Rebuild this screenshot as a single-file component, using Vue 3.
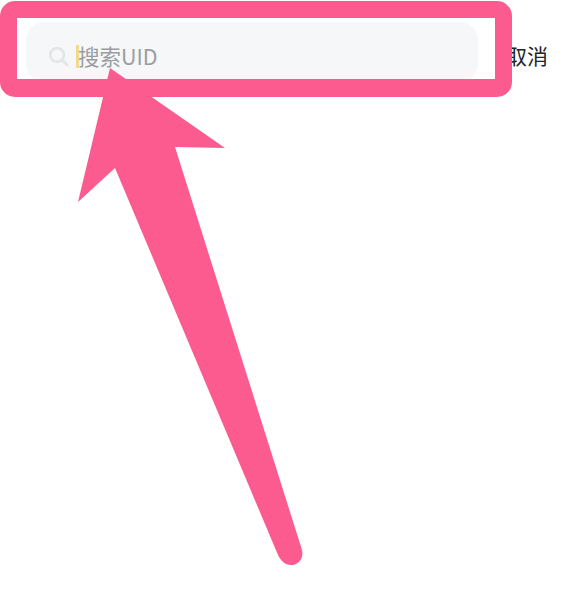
<template>
  <div class="page">
    <div class="search-bar">
      <div class="search-input">
        <svg class="search-icon" viewBox="0 0 22 22" fill="none">
          <circle cx="9.5" cy="9.5" r="7.2" stroke="#e3e5e6" stroke-width="2.8" />
          <path d="M14.8 14.8 L20 19.8" stroke="#e3e5e6" stroke-width="3" stroke-linecap="round" />
        </svg>
        <span class="caret"></span>
        <span class="placeholder">搜索UID</span>
      </div>
      <span class="cancel">取消</span>
    </div>

    <!-- annotation drawn over the screenshot -->
    <div class="highlight"></div>
    <svg class="arrow" viewBox="0 0 578 600">
      <path
        d="M110 68 L225 148 L175 147 L302 550 C304 559 298 565 291 565 C285 565 281 561 278 555 L115 168 L78 202 Z"
        fill="#fb5b8f"
      />
    </svg>
  </div>
</template>

<script setup>
</script>

<style scoped>
.page {
  position: relative;
  width: 578px;
  height: 600px;
  overflow: hidden;
  background: #fff;
  font-family: "Noto Sans CJK SC", "Noto Sans", sans-serif;
}

.search-bar {
  display: flex;
  align-items: flex-start;
  padding: 22px 0 0 26px;
}

.search-input {
  display: flex;
  align-items: center;
  width: 452px;
  height: 60px;
  padding: 8px 0 0 22px;
  box-sizing: border-box;
  border-radius: 18px;
  background: #f5f7f8;
}

.search-icon {
  width: 21px;
  height: 21px;
}

.caret {
  width: 3px;
  height: 23px;
  margin-left: 7px;
  background: #f3d98a;
}

.placeholder {
  margin-left: -1px;
  font-size: 21.5px;
  line-height: 24px;
  color: #9b9ea0;
}

.cancel {
  margin-left: 28px;
  margin-top: 19px;
  font-size: 21px;
  line-height: 28px;
  color: #222426;
}

.highlight {
  position: absolute;
  left: 0;
  top: 1px;
  width: 512px;
  height: 96px;
  box-sizing: border-box;
  border: 17px solid #fb5b8f;
  border-bottom-width: 18px;
  border-radius: 15px;
}

.arrow {
  position: absolute;
  left: 0;
  top: 0;
  width: 578px;
  height: 600px;
}
</style>

<style>
body {
  background: #fff;
}
</style>
